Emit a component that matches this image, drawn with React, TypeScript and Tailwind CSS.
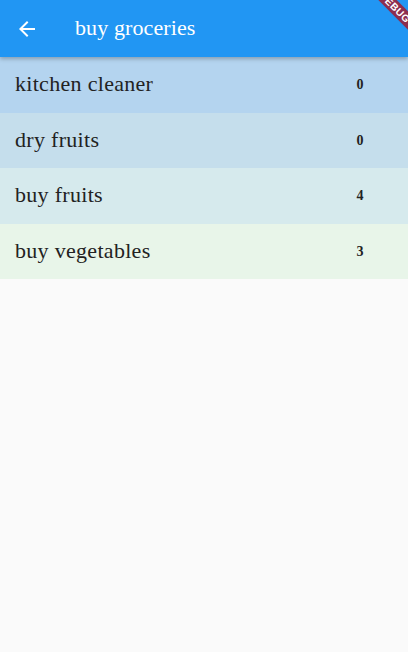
import React from "react";

const items = [
  { name: "kitchen cleaner", count: 0, bg: "bg-[#b4d4ef]" },
  { name: "dry fruits", count: 0, bg: "bg-[#c5deec]" },
  { name: "buy fruits", count: 4, bg: "bg-[#d6eaed]" },
  { name: "buy vegetables", count: 3, bg: "bg-[#e8f5e9]" },
];

export default function App() {
  return (
    <div className="relative w-[408px] h-[652px] overflow-hidden bg-[#fafafa] font-['Liberation_Serif',serif]">
      {/* App bar */}
      <header className="relative z-10 h-[57px] bg-[#2196f3] flex items-center shadow-[0_2px_4px_rgba(0,0,0,0.25)]">
        <div className="w-[52px] flex justify-center pl-[2px]">
          <svg width="24" height="24" viewBox="0 0 24 24" fill="none">
            <path d="M20 11H7.83l5.59-5.59L12 4l-8 8 8 8 1.41-1.41L7.83 13H20v-2z" fill="#fff" />
          </svg>
        </div>
        <h1 className="ml-[23px] text-white text-[22px] tracking-[0.1px] leading-none pb-[2px]">buy groceries</h1>
      </header>

      {/* List */}
      <ul>
        {items.map((it) => (
          <li key={it.name} className={`${it.bg} h-[55.5px] flex items-center pl-[15px]`}>
            <span className="flex-1 text-[22px] tracking-[0.3px] text-[#222] pb-[2px]">{it.name}</span>
            <span className="w-[12px] mr-[42px] text-center text-[14px] font-bold text-[#222]">{it.count}</span>
          </li>
        ))}
      </ul>

      {/* Debug banner */}
      <div className="absolute top-0 right-0 w-[60px] h-[60px] overflow-hidden pointer-events-none z-20">
        <div className="absolute top-[1px] right-[-27px] w-[80px] h-[13px] rotate-45 bg-[#8c2e4e] flex items-center justify-center">
          <span className="font-['Liberation_Sans',sans-serif] text-white text-[10px] font-bold leading-none tracking-[0.5px]">DEBUG</span>
        </div>
      </div>
    </div>
  );
}
